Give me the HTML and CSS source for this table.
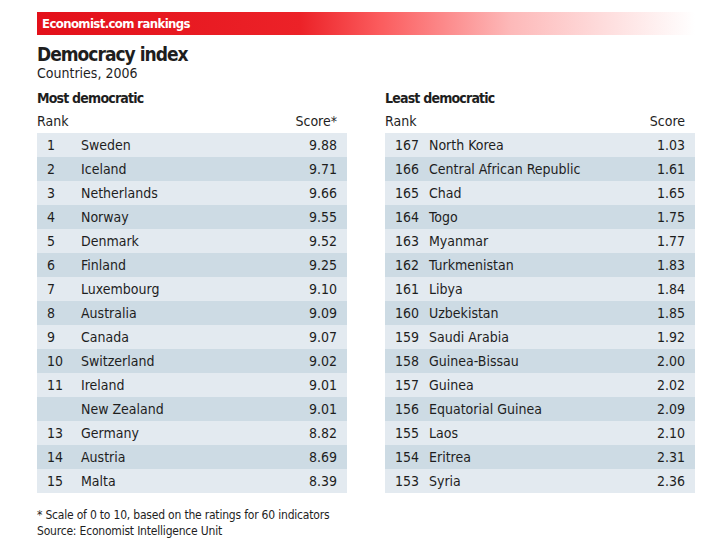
FILE: index.html
```html
<!DOCTYPE html>
<html>
<head>
<meta charset="utf-8">
<link rel="stylesheet" href="styles.css">
</head>
<body>
<div class="page">
  <div class="banner">Economist.com rankings</div>
  <h1 class="title">Democracy index</h1>
  <div class="subtitle">Countries, 2006</div>
  <div class="columns">
    <section class="col">
      <h2 class="colhead">Most democratic</h2>
      <div class="thead"><span>Rank</span><span>Score*</span></div>
      <div class="table">
        <div class="row"><span class="rank">1</span><span class="name">Sweden</span><span class="score">9.88</span></div>
        <div class="row"><span class="rank">2</span><span class="name">Iceland</span><span class="score">9.71</span></div>
        <div class="row"><span class="rank">3</span><span class="name">Netherlands</span><span class="score">9.66</span></div>
        <div class="row"><span class="rank">4</span><span class="name">Norway</span><span class="score">9.55</span></div>
        <div class="row"><span class="rank">5</span><span class="name">Denmark</span><span class="score">9.52</span></div>
        <div class="row"><span class="rank">6</span><span class="name">Finland</span><span class="score">9.25</span></div>
        <div class="row"><span class="rank">7</span><span class="name">Luxembourg</span><span class="score">9.10</span></div>
        <div class="row"><span class="rank">8</span><span class="name">Australia</span><span class="score">9.09</span></div>
        <div class="row"><span class="rank">9</span><span class="name">Canada</span><span class="score">9.07</span></div>
        <div class="row"><span class="rank">10</span><span class="name">Switzerland</span><span class="score">9.02</span></div>
        <div class="row"><span class="rank">11</span><span class="name">Ireland</span><span class="score">9.01</span></div>
        <div class="row"><span class="rank"></span><span class="name">New Zealand</span><span class="score">9.01</span></div>
        <div class="row"><span class="rank">13</span><span class="name">Germany</span><span class="score">8.82</span></div>
        <div class="row"><span class="rank">14</span><span class="name">Austria</span><span class="score">8.69</span></div>
        <div class="row"><span class="rank">15</span><span class="name">Malta</span><span class="score">8.39</span></div>
      </div>
      <div class="notes">
        <p>* Scale of 0 to 10, based on the ratings for 60 indicators</p>
        <p>Source: Economist Intelligence Unit</p>
      </div>
    </section>
    <section class="col">
      <h2 class="colhead">Least democratic</h2>
      <div class="thead"><span>Rank</span><span>Score</span></div>
      <div class="table">
        <div class="row"><span class="rank">167</span><span class="name">North Korea</span><span class="score">1.03</span></div>
        <div class="row"><span class="rank">166</span><span class="name">Central African Republic</span><span class="score">1.61</span></div>
        <div class="row"><span class="rank">165</span><span class="name">Chad</span><span class="score">1.65</span></div>
        <div class="row"><span class="rank">164</span><span class="name">Togo</span><span class="score">1.75</span></div>
        <div class="row"><span class="rank">163</span><span class="name">Myanmar</span><span class="score">1.77</span></div>
        <div class="row"><span class="rank">162</span><span class="name">Turkmenistan</span><span class="score">1.83</span></div>
        <div class="row"><span class="rank">161</span><span class="name">Libya</span><span class="score">1.84</span></div>
        <div class="row"><span class="rank">160</span><span class="name">Uzbekistan</span><span class="score">1.85</span></div>
        <div class="row"><span class="rank">159</span><span class="name">Saudi Arabia</span><span class="score">1.92</span></div>
        <div class="row"><span class="rank">158</span><span class="name">Guinea-Bissau</span><span class="score">2.00</span></div>
        <div class="row"><span class="rank">157</span><span class="name">Guinea</span><span class="score">2.02</span></div>
        <div class="row"><span class="rank">156</span><span class="name">Equatorial Guinea</span><span class="score">2.09</span></div>
        <div class="row"><span class="rank">155</span><span class="name">Laos</span><span class="score">2.10</span></div>
        <div class="row"><span class="rank">154</span><span class="name">Eritrea</span><span class="score">2.31</span></div>
        <div class="row"><span class="rank">153</span><span class="name">Syria</span><span class="score">2.36</span></div>
      </div>
    </section>
  </div>
</div>
</body>
</html>
```
FILE: styles.css
```css
* { box-sizing: border-box; }
html, body { margin: 0; padding: 0; background: #fff; }
body {
  font-family: "DejaVu Sans Condensed", "DejaVu Sans", sans-serif;
  color: #1e1e1e;
  width: 720px;
  height: 540px;
  overflow: hidden;
}
.page {
  padding: 12px 0 0 37px;
  width: 695px;
}
.banner {
  height: 23px;
  line-height: 23px;
  padding-left: 5px;
  color: #fff;
  font-weight: bold;
  font-size: 13px;
  letter-spacing: -0.6px;
  background: linear-gradient(to right, #e3101a 0%, #ec2228 40%, #fb5b5d 52%, #fdb9b9 72%, #ffffff 100%);
}
.title {
  margin: 8px 0 0 0;
  font-size: 19px;
  line-height: 22px;
  font-weight: bold;
  letter-spacing: -1px;
}
.subtitle {
  font-size: 14px;
  line-height: 16px;
}
.columns {
  display: grid;
  grid-template-columns: 310px 310px;
  column-gap: 38px;
  margin-top: 8px;
}
.colhead {
  margin: 0;
  font-size: 14px;
  line-height: 18px;
  font-weight: bold;
  letter-spacing: -0.8px;
}
.thead {
  display: flex;
  justify-content: space-between;
  font-size: 14px;
  padding-top: 3px;
  line-height: 23px;
  padding-right: 10px;
}
.table .row {
  display: flex;
  height: 24px;
  line-height: 24px;
  font-size: 14px;
  background: #e3eaf0;
}
.table .row:nth-child(even) { background: #cddbe4; }
.rank { width: 44px; padding-left: 10px; }
.name { flex: 1; }
.score { padding-right: 10px; }
.notes {
  margin-top: 14px;
  font-size: 12px;
  line-height: 16px;
  letter-spacing: -0.2px;
}
.notes p { margin: 0; }
```
